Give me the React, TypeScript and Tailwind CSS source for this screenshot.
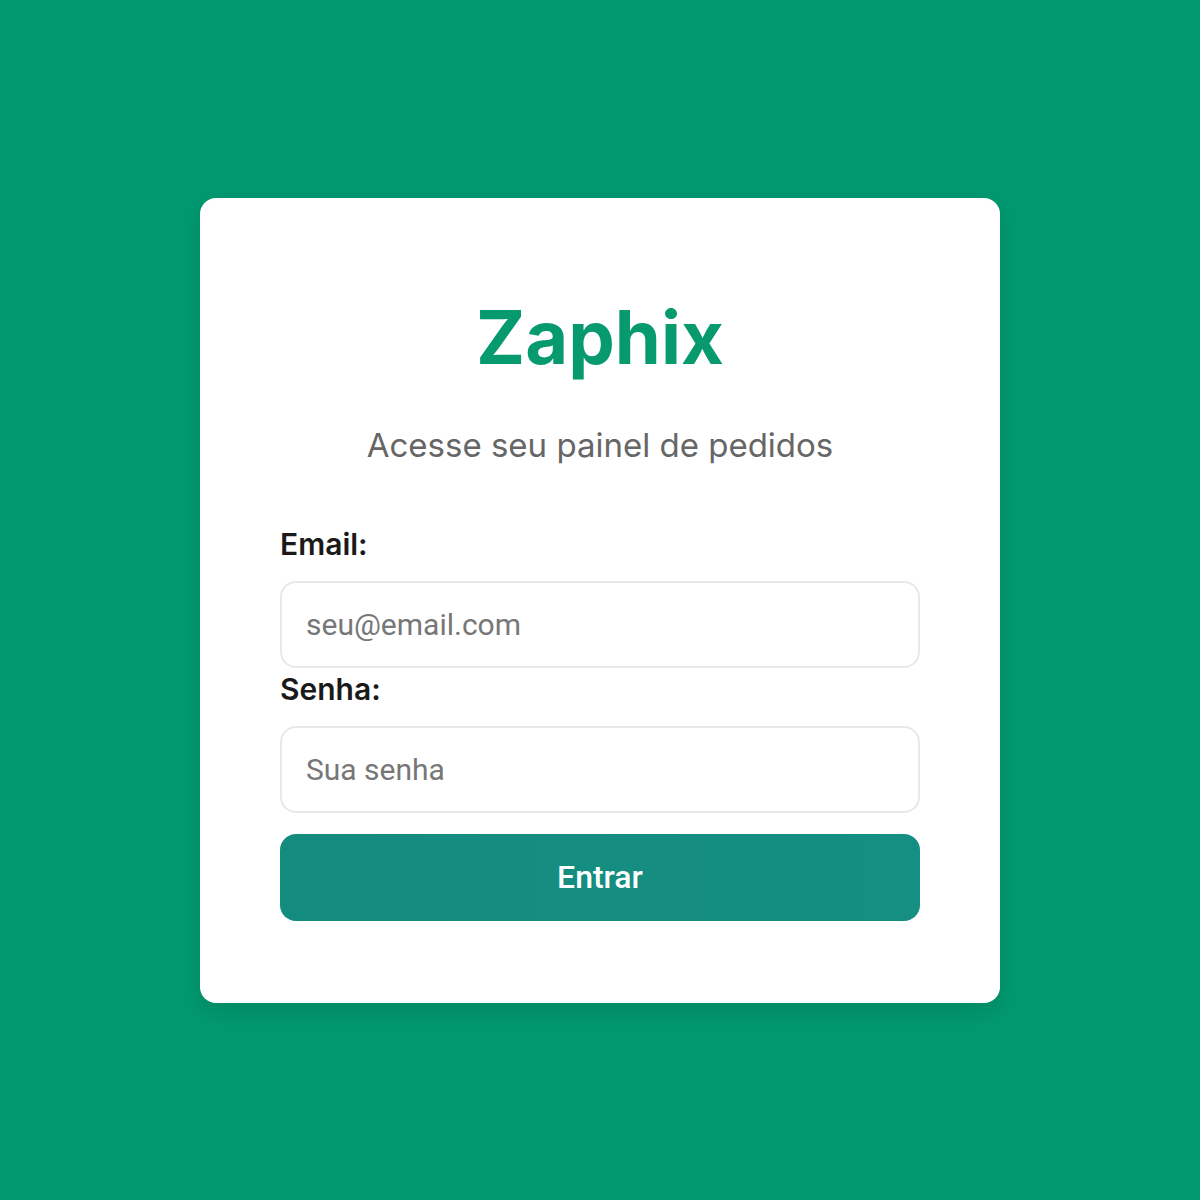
import React, { useState } from 'react';

const App: React.FC = () => {
  const [email, setEmail] = useState('');
  const [senha, setSenha] = useState('');

  return (
    <main className="min-h-screen w-full bg-[#029970] flex items-center justify-center">
      <div className="w-[800px] bg-white rounded-2xl shadow-[0_8px_24px_rgba(0,0,0,0.12)] px-20 pt-[96px] pb-[82px]">
        <h1 className="text-center text-[74px] leading-[86px] font-bold text-[#079a6f] font-['Inter',sans-serif]">
          Zaphix
        </h1>
        <p className="mt-[41px] text-center text-[33px] leading-[48px] text-[#666666] font-['Inter',sans-serif]">
          Acesse seu painel de pedidos
        </p>

        <form className="mt-[54px] flex flex-col" onSubmit={e => e.preventDefault()}>
          <label className="text-[30px] leading-[1.4] font-semibold text-[#1a1a1a] font-['Inter',sans-serif] mb-[16px]">
            Email:
          </label>
          <input
            type="email"
            value={email}
            onChange={e => setEmail(e.target.value)}
            placeholder="seu@email.com"
            className="h-[87px] w-full rounded-2xl border-2 border-[#e8e8e8] px-[24px] text-[30px] font-['Roboto',sans-serif] text-[#333] placeholder:text-[#777] outline-none"
          />
          <label className="text-[30px] leading-[1.4] font-semibold text-[#1a1a1a] font-['Inter',sans-serif] mb-[16px]">
            Senha:
          </label>
          <input
            type="password"
            value={senha}
            onChange={e => setSenha(e.target.value)}
            placeholder="Sua senha"
            className="h-[87px] w-full rounded-2xl border-2 border-[#e8e8e8] px-[24px] text-[30px] font-['Roboto',sans-serif] text-[#333] placeholder:text-[#777] outline-none"
          />
          <button
            type="submit"
            className="mt-[21px] h-[87px] w-full rounded-2xl bg-gradient-to-r from-[#138c7e] to-[#168f83] text-white text-[32px] font-medium font-['Roboto',sans-serif]"
          >
            Entrar
          </button>
        </form>
      </div>
    </main>
  );
};

export default App;
